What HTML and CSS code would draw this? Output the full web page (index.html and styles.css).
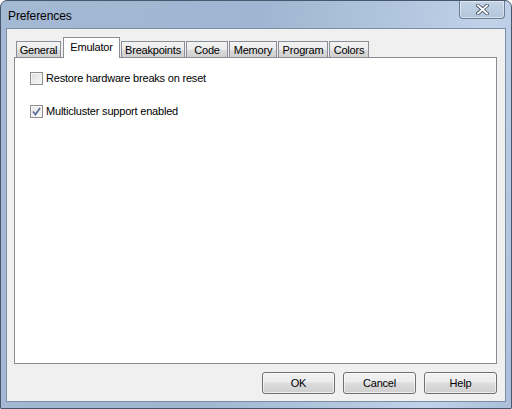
FILE: index.html
```html
<!DOCTYPE html>
<html>
<head>
<meta charset="utf-8">
<link rel="stylesheet" href="styles.css">
</head>
<body>
<div class="window">
  <div class="titlebar">
    <span class="title">Preferences</span>
    <div class="close">
      <svg width="13" height="11" viewBox="0 0 13 11">
        <path d="M2 1.5 L11 9.5 M11 1.5 L2 9.5" stroke="#4a5668" stroke-width="3.6" stroke-linecap="square" fill="none"/>
        <path d="M2 1.5 L11 9.5 M11 1.5 L2 9.5" stroke="#ffffff" stroke-width="1.8" stroke-linecap="square" fill="none"/>
      </svg>
    </div>
  </div>
  <div class="client">
    <div class="tabs">
      <div class="tab t-general">General</div>
      <div class="tab t-emulator active">Emulator</div>
      <div class="tab t-break">Breakpoints</div>
      <div class="tab t-code">Code</div>
      <div class="tab t-memory">Memory</div>
      <div class="tab t-program">Program</div>
      <div class="tab t-colors">Colors</div>
    </div>
    <div class="panel">
      <div class="check"><span class="box"></span><span class="label">Restore hardware breaks on reset</span></div>
      <div class="check"><span class="box checked">
        <svg width="9" height="9" viewBox="0 0 9 9"><path d="M1 4.5 L3.5 7.5 L8 1" stroke="#5a6d9e" stroke-width="1.7" fill="none"/></svg>
      </span><span class="label">Multicluster support enabled</span></div>
    </div>
    <div class="buttons">
      <div class="btn">OK</div>
      <div class="btn">Cancel</div>
      <div class="btn">Help</div>
    </div>
  </div>
</div>
</body>
</html>
```
FILE: styles.css
```css
html, body {
  margin: 0;
  padding: 0;
  background: #ffffff;
}
body {
  font-family: "Liberation Sans", Arial, sans-serif;
  font-size: 11px;
  letter-spacing: -0.2px;
  color: #000;
}
.window {
  width: 512px;
  height: 409px;
  box-sizing: border-box;
  border: 1px solid #48576b;
  border-radius: 7px 7px 1px 1px;
  background: linear-gradient(100deg, #a3b9d4 0%, #9fb5d1 45%, #b6cae2 75%, #c1d3e9 85%, #a9bfda 100%);
  padding: 0 5px 6px 5px;
  display: flex;
  flex-direction: column;
}
.titlebar {
  height: 27px;
  display: flex;
  align-items: flex-start;
  flex: none;
}
.title {
  font-size: 12px;
  color: #000;
  margin: 8px 0 0 2px;
  letter-spacing: -0.1px;
}
.close {
  margin-left: auto;
  margin-right: 1px;
  width: 46px;
  height: 18px;
  box-sizing: border-box;
  border: 1px solid #6b7d94;
  border-top: none;
  border-radius: 0 0 4px 4px;
  background: linear-gradient(#c4d3e5, #b3c6dd);
  box-shadow: inset 0 0 0 1px rgba(255,255,255,0.45);
  display: flex;
  align-items: center;
  justify-content: center;
}
.client {
  flex: 1;
  border: 1px solid #7d8ea4;
  background: #f0f0f0;
  padding: 8px 8px 7px 7px;
  display: flex;
  flex-direction: column;
}
.tabs {
  height: 20px;
  display: flex;
  align-items: flex-end;
  padding-left: 2px;
  gap: 1px;
  flex: none;
}
.tab {
  height: 16px;
  box-sizing: border-box;
  border: 1px solid #8b8e96;
  border-bottom: none;
  background: linear-gradient(#f3f3f3, #ebebeb 50%, #dcdcdc 51%, #cfcfcf);
  text-align: center;
  line-height: 15px;
  padding-top: 1px;
}
.tab.active {
  height: 21px;
  background: #ffffff;
  margin-bottom: -1px;
  position: relative;
  z-index: 1;
  line-height: 18px;
  padding-top: 0;
  margin-left: 1px;
}
.t-general { width: 45px; }
.t-emulator { width: 57px; }
.t-break { width: 64px; }
.t-code { width: 42px; }
.t-memory { width: 48px; }
.t-program { width: 50px; }
.t-colors { width: 40px; }
.panel {
  flex: 1;
  background: #ffffff;
  border: 1px solid #898c95;
  padding: 14px 0 0 15px;
  display: flex;
  flex-direction: column;
  gap: 20px;
}
.check {
  display: flex;
  align-items: center;
  height: 13px;
}
.box {
  width: 13px;
  height: 13px;
  box-sizing: border-box;
  border: 1px solid #8e8f8f;
  background: linear-gradient(135deg, #dcdcdc, #fafafa);
  box-shadow: inset 0 0 0 1px #f4f4f4;
  display: flex;
  align-items: center;
  justify-content: center;
  flex: none;
}
.box.checked {
  background: linear-gradient(135deg, #e4e4e4, #fbfbfb);
}
.label {
  margin-left: 3px;
  line-height: 13px;
}
.buttons {
  display: flex;
  justify-content: flex-end;
  gap: 8px;
  margin-top: 8px;
  flex: none;
}
.btn {
  width: 73px;
  height: 22px;
  box-sizing: border-box;
  border: 1px solid #707070;
  border-radius: 3px;
  background: linear-gradient(#f2f2f2, #ebebeb 45%, #dddddd 50%, #cfcfcf);
  box-shadow: inset 0 0 0 1px rgba(255,255,255,0.6);
  display: flex;
  align-items: center;
  justify-content: center;
  font-size: 11px;
}
```
